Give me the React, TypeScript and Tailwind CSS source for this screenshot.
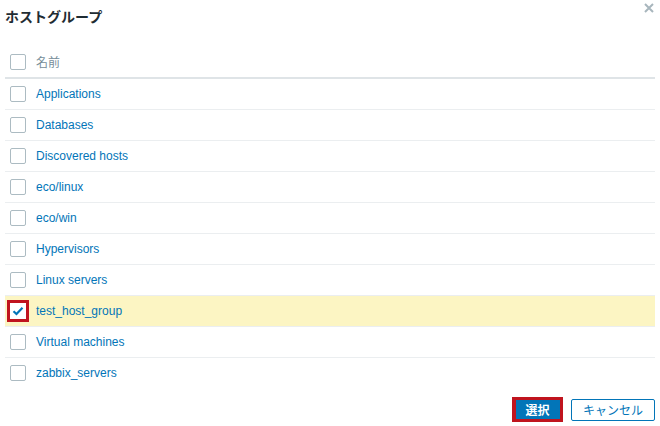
import React from "react";

const groups = [
  "Applications",
  "Databases",
  "Discovered hosts",
  "eco/linux",
  "eco/win",
  "Hypervisors",
  "Linux servers",
  "test_host_group",
  "Virtual machines",
  "zabbix_servers",
];

const Box: React.FC<{ checked?: boolean }> = ({ checked }) =>
  checked ? (
    <span className="flex h-[22px] w-[22px] items-center justify-center bg-[#c0141e]">
      <span className="flex h-[16px] w-[16px] items-center justify-center bg-white">
        <svg width="12" height="10" viewBox="0 0 12 10">
          <path d="M1.5 5.2 L4.5 8 L10.5 1.8" fill="none" stroke="#0275b8" strokeWidth="2.2" />
        </svg>
      </span>
    </span>
  ) : (
    <span className="block h-[16px] w-[16px] rounded-[2px] border border-[#acbbc2] bg-white" />
  );

export default function App() {
  return (
    <div
      className="relative h-[426px] w-[660px] bg-white text-[12px]"
      style={{ fontFamily: '"Liberation Sans", Arial, "Noto Sans CJK JP", sans-serif' }}
    >
      <div className="flex h-[33px] items-center justify-between pl-[5px] pr-[6px]">
        <h2 className="-mt-[1px] text-[14px] font-bold text-[#1f2c33]" style={{ fontFamily: '"Noto Sans CJK JP", sans-serif' }}>
          ホストグループ
        </h2>
        <button className="-mt-[18px] text-[#a8b6bd]" aria-label="close">
          <svg width="10" height="10" viewBox="0 0 10 10">
            <path d="M1 1 L9 9 M9 1 L1 9" stroke="currentColor" strokeWidth="2" />
          </svg>
        </button>
      </div>

      <div className="mx-[5px] mt-[14px]">
        <div className="flex h-[32px] items-center gap-[10px] border-b-2 border-[#dfe4e7] pl-[5px]">
          <Box />
          <span className="text-[#768d99]" style={{ fontFamily: '"Noto Sans CJK JP", sans-serif' }}>名前</span>
        </div>
        {groups.map((g, i) => {
          const sel = g === "test_host_group";
          const last = i === groups.length - 1;
          return (
            <div
              key={g}
              className={`flex items-center ${last ? "h-[30px]" : "h-[31px] border-b border-[#ebeef0]"} ${sel ? "gap-[7px] bg-[#fcf5c3] pl-[2px]" : "gap-[10px] pl-[5px]"}`}
            >
              <Box checked={sel} />
              <span className="text-[#0275b8]">{g}</span>
            </div>
          );
        })}
      </div>

      <div className="mt-[9px] flex items-center justify-end gap-[8px] pr-[5px]">
        <button className="flex h-[25px] w-[51px] items-center justify-center bg-[#c0141e]">
          <span
            className="flex h-[19px] w-[44px] items-center justify-center bg-[#0275b8] font-bold text-white"
            style={{ fontFamily: '"Noto Sans CJK JP", sans-serif' }}
          >
            選択
          </span>
        </button>
        <button
          className="h-[22px] w-[84px] rounded-[2px] border border-[#0275b8] bg-white text-[#0275b8]"
          style={{ fontFamily: '"Noto Sans CJK JP", sans-serif' }}
        >
          キャンセル
        </button>
      </div>
    </div>
  );
}
